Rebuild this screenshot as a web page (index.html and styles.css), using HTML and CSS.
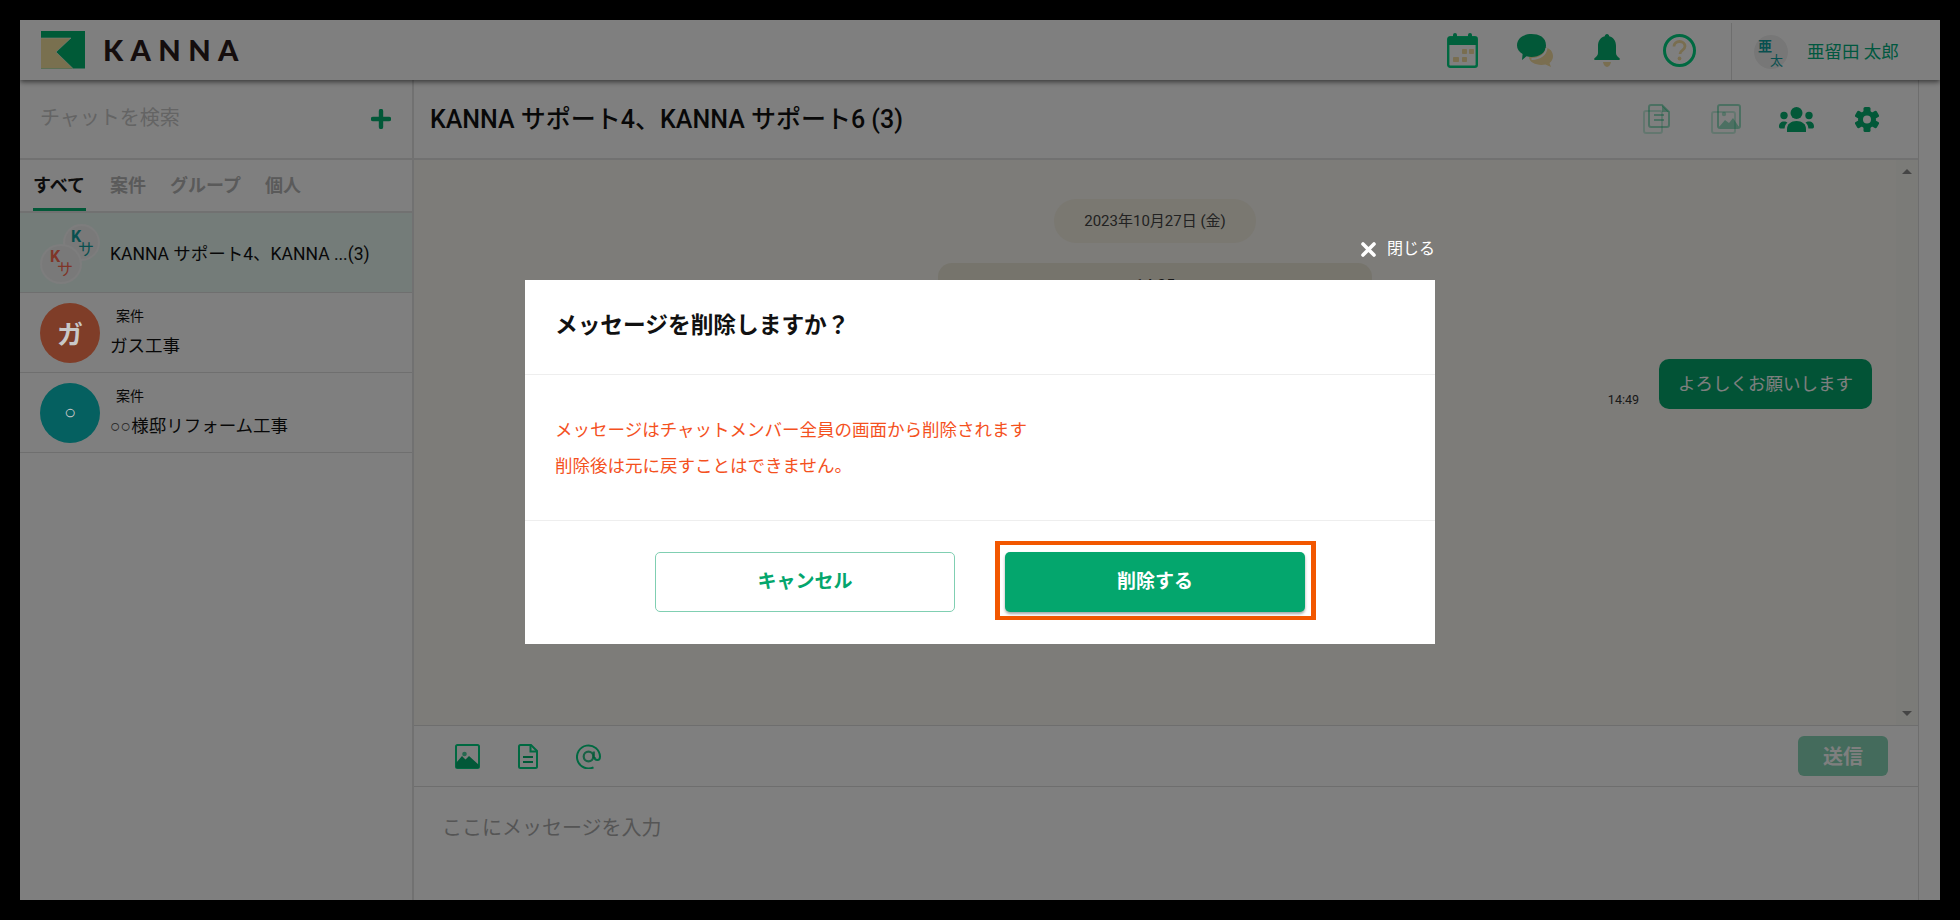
FILE: index.html
```html
<!DOCTYPE html>
<html lang="ja">
<head>
<meta charset="utf-8">
<title>KANNA チャット</title>
<link rel="stylesheet" href="styles.css">
</head>
<body>
<div class="app">
  <header class="topbar">
    <div class="brand">
      <svg class="logo" viewBox="0 0 44 38"><rect width="44" height="37.5" fill="#00b46e"/><polygon points="0,7 30,7 15,21 32,37.5 0,37.5" fill="#f2e09e"/><polyline points="0,7 30,7 15,21 32,37.5" fill="none" stroke="#fff" stroke-width=".8" opacity=".7"/></svg>
      <span class="brand-name">KANNA</span>
    </div>
    <nav class="top-icons">
      <svg class="ic-cal" viewBox="0 0 31 35"><rect x="1.2" y="4.2" width="28.6" height="29.6" rx="2" fill="none" stroke="#00d282" stroke-width="2.4"/><rect x="1" y="4" width="29" height="8" fill="#00c078"/><rect x="6" y="0" width="4" height="7" rx="2" fill="#00c078"/><rect x="21" y="0" width="4" height="7" rx="2" fill="#00c078"/><g fill="#f2dca0"><rect x="15" y="16" width="5" height="5" rx=".8"/><rect x="22" y="16" width="5" height="5" rx=".8"/><rect x="6" y="24" width="6" height="5" rx=".8"/><rect x="15" y="24" width="5" height="5" rx=".8"/></g></svg>
      <svg class="ic-chat" viewBox="0 0 36 33"><path d="M21 13c8-1.500 15 2 15 9 0 3-1.300 5.500-3.500 7l1.500 4-5.500-2.500C21 32 12 29 12 23z" fill="#f4dca0"/><path d="M14.500 0C22 0 29 3 29 11.500 29 19 22 23 14.500 23c-1.800 0-3.400-.2-5-.7L5 26l.6-6C2 17.800 0 15 0 11.500 0 4 7 0 14.500 0z" fill="#04b070"/><path d="M29.500 14c-.5 6-6 11-15 11" fill="none" stroke="#fff" stroke-width="2"/></svg>
      <svg class="ic-bell" viewBox="0 0 26 33"><path d="M13 0c1.300 0 2.200 1 2.200 2.300C19.600 3.400 22 7.200 22 12v7c0 2.200 1.500 3.800 3.300 5 .9.600.6 2-.6 2H1.300c-1.200 0-1.500-1.400-.6-2C2.500 22.800 4 21.200 4 19v-7c0-4.800 2.400-8.600 6.800-9.700C10.800 1 11.700 0 13 0z" fill="#04b070"/><path d="M9 28h8c-.5 2.800-2 5-4 5s-3.500-2.200-4-5z" fill="#f2dca0"/></svg>
      <svg class="ic-help" viewBox="0 0 33 33"><circle cx="16.500" cy="16.500" r="15" fill="none" stroke="#00d282" stroke-width="3"/><path d="M11 12.500c0-3.200 2.500-5 5.500-5s5.500 1.900 5.500 4.800c0 2-1.200 3-2.700 4.100-1.500 1-2.300 1.900-2.300 3.600" fill="none" stroke="#f2dca0" stroke-width="2.800"/><circle cx="16.500" cy="24.500" r="1.900" fill="#f2dca0"/></svg>
    </nav>
    <div class="user">
      <div class="user-avatar"><span class="ua-a">亜</span><span class="ua-b">太</span></div>
      <span class="user-name">亜留田 太郎</span>
    </div>
  </header>

  <div class="workspace">
    <aside class="sidebar">
      <div class="search">
        <span class="search-text">チャットを検索</span>
        <svg class="plus" viewBox="0 0 20 20"><path d="M10 2v16M2 10h16" stroke="#04b070" stroke-width="4.400" stroke-linecap="round"/></svg>
      </div>
      <div class="tabs">
        <span class="tab tab-on">すべて</span>
        <span class="tab">案件</span>
        <span class="tab">グループ</span>
        <span class="tab">個人</span>
      </div>
      <div class="room room-on">
        <div class="stack">
          <div class="mini mini-back"><b>K</b><span>サ</span></div>
          <div class="mini mini-front"><b>K</b><span>サ</span></div>
        </div>
        <div class="room-text"><div class="room-name room-name-solo">KANNA サポート4、KANNA ...(3)</div></div>
      </div>
      <div class="room">
        <div class="avatar av-orange"><span class="av-letter">ガ</span></div>
        <div class="room-text"><div class="room-tag">案件</div><div class="room-name">ガス工事</div></div>
      </div>
      <div class="room">
        <div class="avatar av-teal"><span class="av-letter av-thin">○</span></div>
        <div class="room-text"><div class="room-tag">案件</div><div class="room-name"><span class="circ">○○</span>様邸リフォーム工事</div></div>
      </div>
    </aside>

    <main class="chat">
      <div class="chat-head">
        <h1 class="chat-title">KANNA サポート4、KANNA サポート6 (3)</h1>
        <div class="chat-tools">
          <svg class="ic-files" viewBox="0 0 27 30"><g fill="none" stroke="#00b46e"><rect x="1" y="7" width="18" height="22" rx="2" stroke-width="2" opacity=".22"/><path d="M8 1h11l7 7v13a2 2 0 0 1-2 2H8a2 2 0 0 1-2-2V3a2 2 0 0 1 2-2z" stroke-width="2" opacity=".4"/><path d="M11 11h10M11 16h10" stroke-width="2" opacity=".4"/></g><path d="M19 1l7 7h-7z" fill="#00b46e" opacity=".4"/></svg>
          <svg class="ic-images" viewBox="0 0 30 30"><g fill="none" stroke="#00b46e" stroke-width="2"><rect x="1" y="8" width="23" height="21" rx="2" opacity=".22"/><rect x="7" y="1" width="22" height="23" rx="2" opacity=".4"/></g><path d="M8 23l6-7 4 3 4-5 6 9z" fill="#00b46e" opacity=".4"/><circle cx="13" cy="10" r="2.200" fill="#00b46e" opacity=".3"/></svg>
          <svg class="ic-people" viewBox="0 0 35 25"><g fill="#04b070"><circle cx="17.500" cy="6" r="6"/><circle cx="5" cy="8.500" r="3.700"/><circle cx="30" cy="8.500" r="3.700"/><path d="M8 25v-3c0-5 4-8 9.500-8s9.500 3 9.500 8v3z"/><path d="M0 19.500c0-3 2-5 5-5 1.500 0 2.700.4 3.500 1.100-1.800 1.500-2.700 3.500-2.900 5.900H1.500C.6 21.500 0 20.500 0 19.500z"/><path d="M35 19.500c0-3-2-5-5-5-1.500 0-2.700.4-3.500 1.100 1.800 1.500 2.700 3.500 2.900 5.900h4.100c.9 0 1.500-1 1.500-2z"/></g></svg>
          <svg class="ic-gear" viewBox="0 0 24 25"><g fill="#04b070"><rect x="8.500" y="0" width="7" height="25" rx="1.500"/><rect x="8.500" y="0" width="7" height="25" rx="1.500" transform="rotate(60 12 12.500)"/><rect x="8.500" y="0" width="7" height="25" rx="1.500" transform="rotate(120 12 12.500)"/></g><circle cx="12" cy="12.500" r="6.500" fill="none" stroke="#04b070" stroke-width="5"/><circle cx="12" cy="12.500" r="4" fill="#fff"/></svg>
        </div>
      </div>
      <div class="log">
        <div class="log-body">
          <div class="date-pill">2023年10月27日 (金)</div>
          <div class="sys-pill">14:35</div>
          <div class="msg-row"><span class="msg-time">14:49</span><div class="bubble">よろしくお願いします</div></div>
        </div>
        <div class="scrollbar"><span class="arrow-up"></span><span class="arrow-down"></span></div>
      </div>
      <div class="composer-bar">
        <svg class="ic-pic" viewBox="0 0 25 25"><rect x="1" y="1" width="23" height="23" rx="1.500" fill="none" stroke="#00d282" stroke-width="2"/><path d="M1 24v-5l6-7 3.500 3.500L14 12l10 9v3z" fill="#04b070"/><circle cx="9.500" cy="10" r="2.300" fill="#00c078" opacity=".7"/></svg>
        <svg class="ic-doc" viewBox="0 0 20 25"><path d="M2.500 1H13l6 6v15.500a1.500 1.500 0 0 1-1.500 1.500h-15A1.500 1.500 0 0 1 1 22.500v-20A1.500 1.500 0 0 1 2.500 1z" fill="none" stroke="#00d282" stroke-width="2"/><path d="M12.500 1v6.500H19" fill="none" stroke="#00d282" stroke-width="2"/><path d="M5 13h10M5 18h10" stroke="#00b46e" stroke-width="2"/></svg>
        <svg class="ic-at" viewBox="0 0 25 25"><path d="M17.500 23.300A11.500 11.500 0 1 1 24 12.500c0 2.400-1 3.500-2.600 3.500s-2.900-1-2.900-3" fill="none" stroke="#00d282" stroke-width="2"/><circle cx="12.500" cy="12.500" r="4.800" fill="none" stroke="#00b46e" stroke-width="2.200" opacity=".8"/><path d="M17.800 7.500V14" stroke="#00b46e" stroke-width="2.200" opacity=".8"/></svg>
        <button class="send" type="button">送信</button>
      </div>
      <div class="composer"><span class="composer-text">ここにメッセージを入力</span></div>
    </main>
  </div>

  <div class="scrim">
    <section class="modal">
      <button class="close" type="button"><svg class="close-x" viewBox="0 0 15 15"><path d="M2 2l11 11M13 2L2 13" stroke="#fff" stroke-width="3.600" stroke-linecap="round"/></svg>閉じる</button>
      <h2 class="modal-title">メッセージを削除しますか？</h2>
      <div class="modal-body">
        <p class="warn">メッセージはチャットメンバー全員の画面から削除されます</p>
        <p class="warn">削除後は元に戻すことはできません。</p>
      </div>
      <div class="modal-foot">
        <button class="btn btn-ghost" type="button">キャンセル</button>
        <button class="btn btn-solid" type="button">削除する</button>
      </div>
    </section>
  </div>
</div>
</body>
</html>
```

FILE: styles.css
```css
* { box-sizing: border-box; }
html, body { margin: 0; height: 100%; }
body {
  background: #000;
  padding: 20px;
  overflow: hidden;
  font-family: Roboto, "Noto Sans CJK JP", sans-serif;
  color: #222;
}
svg { display: block; flex: none; }
button { font-family: inherit; cursor: pointer; }
p, h1, h2 { margin: 0; }

.app {
  position: relative;
  width: 1920px;
  height: 880px;
  background: #fff;
  display: flex;
  flex-direction: column;
  overflow: hidden;
}

/* top bar */
.topbar {
  height: 60px;
  flex: none;
  display: flex;
  align-items: center;
  padding-left: 21px;
  background: #fff;
  box-shadow: 0 2px 5px rgba(0, 0, 0, .55);
  position: relative;
  z-index: 1;
}
.brand { display: flex; align-items: center; gap: 18px; }
.logo { width: 44px; height: 38px; }
.brand-name {
  font-family: Lato, sans-serif;
  font-weight: 900;
  font-size: 29px;
  line-height: 38px;
  letter-spacing: 7.400px;
  color: #2a1a1a;
}
.top-icons { margin-left: auto; display: flex; align-items: center; }
.ic-cal { width: 31px; height: 35px; margin-right: 39px; }
.ic-chat { width: 36px; height: 33px; margin-right: 41px; }
.ic-bell { width: 26px; height: 33px; margin-right: 43px; }
.ic-help { width: 33px; height: 33px; margin-right: 35px; }
.user {
  width: 209px;
  height: 57px;
  margin-top: 3px;
  border-left: 1px solid #ddd;
  display: flex;
  align-items: center;
  padding-left: 22px;
  gap: 19px;
}
.user-avatar {
  width: 34px;
  height: 34px;
  border-radius: 50%;
  background: #efefef;
  font-size: 14px;
  line-height: 14px;
  color: #10a0a0;
  display: flex;
  flex-direction: column;
  flex: none;
}
.ua-a { align-self: flex-start; margin-top: 4px; margin-left: 4px; font-weight: 700; }
.ua-b { align-self: flex-end; margin-right: 5px; margin-top: 1px; font-weight: 400; font-size: 13px; }
.user-name { font-size: 17.500px; color: #00b080; white-space: nowrap; padding-bottom: 3px; }

/* layout */
.workspace { flex: 1; min-height: 0; display: flex; padding-right: 21px; }

/* sidebar */
.sidebar { width: 394px; flex: none; border-right: 2px solid #e2e2e2; display: flex; flex-direction: column; }
.search {
  height: 80px;
  flex: none;
  border-bottom: 2px solid #e2e2e2;
  display: flex;
  align-items: center;
  justify-content: space-between;
  padding: 0 21px 0 20px;
}
.search-text { font-size: 20px; color: #c8c8c8; padding-bottom: 5px; }
.plus { width: 20px; height: 20px; }
.tabs {
  height: 53px;
  flex: none;
  border-bottom: 2px solid #e2e2e2;
  display: flex;
  gap: 24px;
  padding-left: 13px;
}
.tab {
  font-size: 18px;
  font-weight: 700;
  color: #b4b4b4;
  height: 51px;
  line-height: 52px;
}
.tab-on { color: #1a1a1a; border-bottom: 3px solid #04b070; width: 53px; }
.room {
  height: 80px;
  flex: none;
  border-bottom: 1px solid #dedede;
  display: flex;
  align-items: center;
  padding-left: 20px;
  gap: 10px;
}
.room-on { background: #e8f8f3; }
.avatar {
  width: 60px;
  height: 60px;
  border-radius: 50%;
  display: flex;
  align-items: center;
  justify-content: center;
  flex: none;
}
.av-orange { background: #ff7a50; }
.av-teal { background: #0ac0c0; }
.av-letter { font-size: 26px; font-weight: 700; color: #c8c8c8; position: relative; z-index: 3; }
.av-thin { font-family: "Liberation Sans", sans-serif; font-size: 20px; font-weight: 400; }
.room-text { min-width: 0; padding-top: 2px; }
.room-tag { font-size: 14px; line-height: 20px; padding-left: 6px; color: #111; }
.room-name { font-size: 17.500px; line-height: 32px; color: #111; white-space: nowrap; padding-top: 4px; }
.room-name-solo { padding-top: 0; }
.circ { font-family: "Liberation Sans", sans-serif; color: #444; }
.stack { position: relative; width: 60px; height: 60px; flex: none; }
.mini {
  position: absolute;
  border-radius: 50%;
  background: #f3f3f3;
  border: 2px solid #fafafa;
  display: flex;
  flex-direction: column;
  font-size: 16px;
  line-height: 16px;
}
.mini b { align-self: flex-start; }
.mini span { align-self: flex-end; margin-top: -3px; }
.mini-back { left: 23px; top: 1px; width: 37px; height: 37px; color: #10a0a0; padding: 3px 4px 0 6px; }
.mini-front { left: 0; top: 21px; width: 42px; height: 40px; color: #ff6a50; padding: 3px 7px 0 8px; }

/* chat */
.chat { flex: 1; min-width: 0; display: flex; flex-direction: column; border-right: 1px solid #ddd; }
.chat-head {
  height: 80px;
  flex: none;
  border-bottom: 2px solid #e2e2e2;
  display: flex;
  align-items: center;
  padding-left: 16px;
}
.chat-title { font-size: 25px; font-weight: 500; color: #111; white-space: nowrap; padding-bottom: 5px; }
.chat-tools { margin-left: auto; display: flex; align-items: center; padding-right: 39px; }
.ic-files { width: 27px; height: 30px; margin-right: 41px; }
.ic-images { width: 30px; height: 30px; margin-right: 38px; }
.ic-people { width: 35px; height: 25px; margin-right: 41px; }
.ic-gear { width: 24px; height: 25px; }

.log { flex: 1; min-height: 0; display: flex; background: #faf8f2; border-bottom: 1px solid #ddd; }
.log-body { flex: 1; min-width: 0; overflow: hidden; display: flex; flex-direction: column; align-items: center; padding-top: 39px; }
.date-pill {
  width: 202px;
  height: 44px;
  border-radius: 22px;
  background: #f4f0e2;
  font-size: 15px;
  line-height: 44px;
  text-align: center;
  color: #444;
  flex: none;
}
.sys-pill {
  width: 434px;
  height: 76px;
  margin-top: 20px;
  border-radius: 14px;
  background: #ece8d8;
  font-size: 16px;
  line-height: 34px;
  text-align: center;
  padding-top: 6px;
  color: #333;
  flex: none;
}
.msg-row { align-self: flex-end; margin-top: 20px; margin-right: 24px; display: flex; align-items: flex-end; gap: 20px; }
.msg-time { font-size: 12.500px; line-height: 18px; color: #333; }
.bubble {
  width: 213px;
  height: 50px;
  border-radius: 10px;
  background: #04a66d;
  color: #fff;
  font-size: 17.500px;
  line-height: 50px;
  text-align: center;
  white-space: nowrap;
}
.scrollbar { width: 22px; flex: none; background: #f7f6f0; display: flex; flex-direction: column; justify-content: space-between; align-items: center; padding: 9px 0; }
.arrow-up { width: 0; height: 0; border: 5px solid transparent; border-top: 0; border-bottom: 5px solid #8a8a8a; }
.arrow-down { width: 0; height: 0; border: 5px solid transparent; border-bottom: 0; border-top: 5px solid #8a8a8a; }

.composer-bar {
  height: 61px;
  flex: none;
  border-bottom: 1px solid #ddd;
  display: flex;
  align-items: center;
  gap: 38px;
  padding: 0 30px 0 41px;
}
.ic-pic, .ic-at { width: 25px; height: 25px; }
.ic-doc { width: 20px; height: 25px; }
.send {
  margin-left: auto;
  width: 90px;
  height: 40px;
  border: 0;
  border-radius: 6px;
  background: #88d6b8;
  color: #fff;
  font-size: 20px;
  font-weight: 700;
  padding: 0 0 2px;
}
.composer { flex: none; height: 113px; padding: 25px 28px; }
.composer-text { font-size: 20px; line-height: 32px; color: #aaa; }

/* modal */
.scrim {
  position: absolute;
  inset: 0;
  z-index: 2;
  background: rgba(0, 0, 0, .5);
  display: flex;
  justify-content: center;
  padding-top: 260px;
}
.modal { position: relative; width: 910px; height: 364px; background: #fff; z-index: 4; }
.close {
  position: absolute;
  right: 0;
  bottom: calc(100% + 19px);
  display: flex;
  align-items: center;
  gap: 11px;
  background: none;
  border: 0;
  padding: 0;
  color: #fff;
  font-size: 16px;
  line-height: 24px;
}
.close-x { width: 15px; height: 15px; }
.modal-title {
  height: 95px;
  border-bottom: 1px solid #eee;
  padding-left: 30px;
  font-size: 22.700px;
  font-weight: 700;
  line-height: 92px;
  color: #111;
}
.modal-body { height: 145px; padding: 37px 30px 0; }
.warn { font-size: 17.500px; line-height: 36px; color: #f4511e; white-space: nowrap; }
.modal-foot {
  height: 124px;
  border-top: 1px solid #eee;
  display: flex;
  justify-content: center;
  gap: 50px;
  padding-top: 31px;
}
.btn {
  position: relative;
  width: 300px;
  height: 60px;
  border-radius: 5px;
  font-size: 19px;
  font-weight: 700;
  padding: 0 0 5px;
}
.btn-ghost { background: #fff; border: 1px solid #80cfb2; color: #04a66d; }
.btn-solid { background: #04a66d; border: 0; color: #fff; box-shadow: 0 2px 3px rgba(0, 0, 0, .35); }
.btn-solid::after {
  content: "";
  position: absolute;
  left: -10px;
  right: -11px;
  top: -11px;
  bottom: -8px;
  border: solid #f25700;
  border-width: 4px 5px;
}
```
